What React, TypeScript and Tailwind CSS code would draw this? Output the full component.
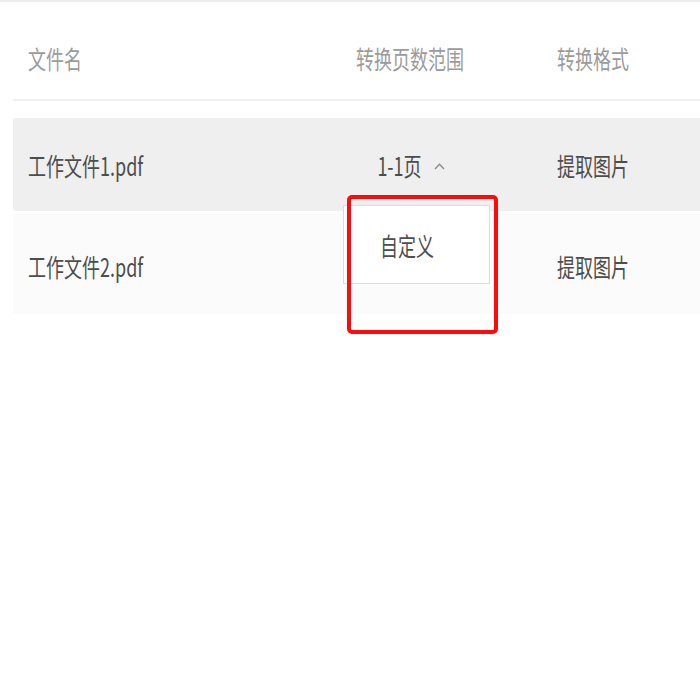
import React from "react";

const font = { fontFamily: '"Microsoft YaHei", "Noto Sans CJK SC", "Noto Sans", sans-serif' };

function T({ children, className = "" }: { children: React.ReactNode; className?: string }) {
  return <span className={`inline-block scale-y-[1.4] ${className}`}>{children}</span>;
}

export default function App() {
  return (
    <div className="relative w-[700px] h-[700px] bg-white border-t-[2px] border-[#ededed] overflow-hidden" style={font}>
      <div className="ml-[13px] text-[18px] leading-none">
        {/* header */}
        <div className="flex h-[99px] pt-[15px] items-center border-b-[2px] border-[#f0f0f0] text-[#9b9b9b]">
          <div className="w-[297px] pl-[15px]"><T>文件名</T></div>
          <div className="w-[200px] text-center"><T>转换页数范围</T></div>
          <div className="pl-[47px]"><T>转换格式</T></div>
        </div>
        <div className="h-[17px]" />
        {/* row 1 */}
        <div className="flex h-[93px] items-center bg-[#efefef] rounded-l-[3px] text-[#4d4d4d]">
          <div className="w-[297px] pl-[15px]"><T>工作文件1.pdf</T></div>
          <div className="w-[200px] flex justify-center items-center gap-[12px] pl-[2px]">
            <T>1-1页</T>
            <svg width="11" height="7" viewBox="0 0 11 7" className="mt-[4px]">
              <path d="M1 6 L5.5 1.2 L10 6" fill="none" stroke="#8a8a8a" strokeWidth="1.3" />
            </svg>
          </div>
          <div className="pl-[47px]"><T>提取图片</T></div>
        </div>
        <div className="h-[3px]" />
        {/* row 2 */}
        <div className="flex h-[100px] pt-[4px] items-center bg-[#fbfbfb] text-[#4d4d4d]">
          <div className="w-[297px] pl-[15px]"><T>工作文件2.pdf</T></div>
          <div className="w-[200px]" />
          <div className="pl-[47px]"><T>提取图片</T></div>
        </div>
      </div>

      {/* dropdown */}
      <div className="absolute left-[343px] top-[203px] w-[147px] h-[79px] bg-white border border-[#dcdcdc] flex items-center pl-[36px] text-[18px] leading-none text-[#4d4d4d]">
        <T>自定义</T>
      </div>

      {/* red highlight */}
      <div className="absolute left-[347px] top-[193px] w-[151px] h-[139px] border-[4px] border-[#ff0a0a] rounded-[5px]" />
    </div>
  );
}
